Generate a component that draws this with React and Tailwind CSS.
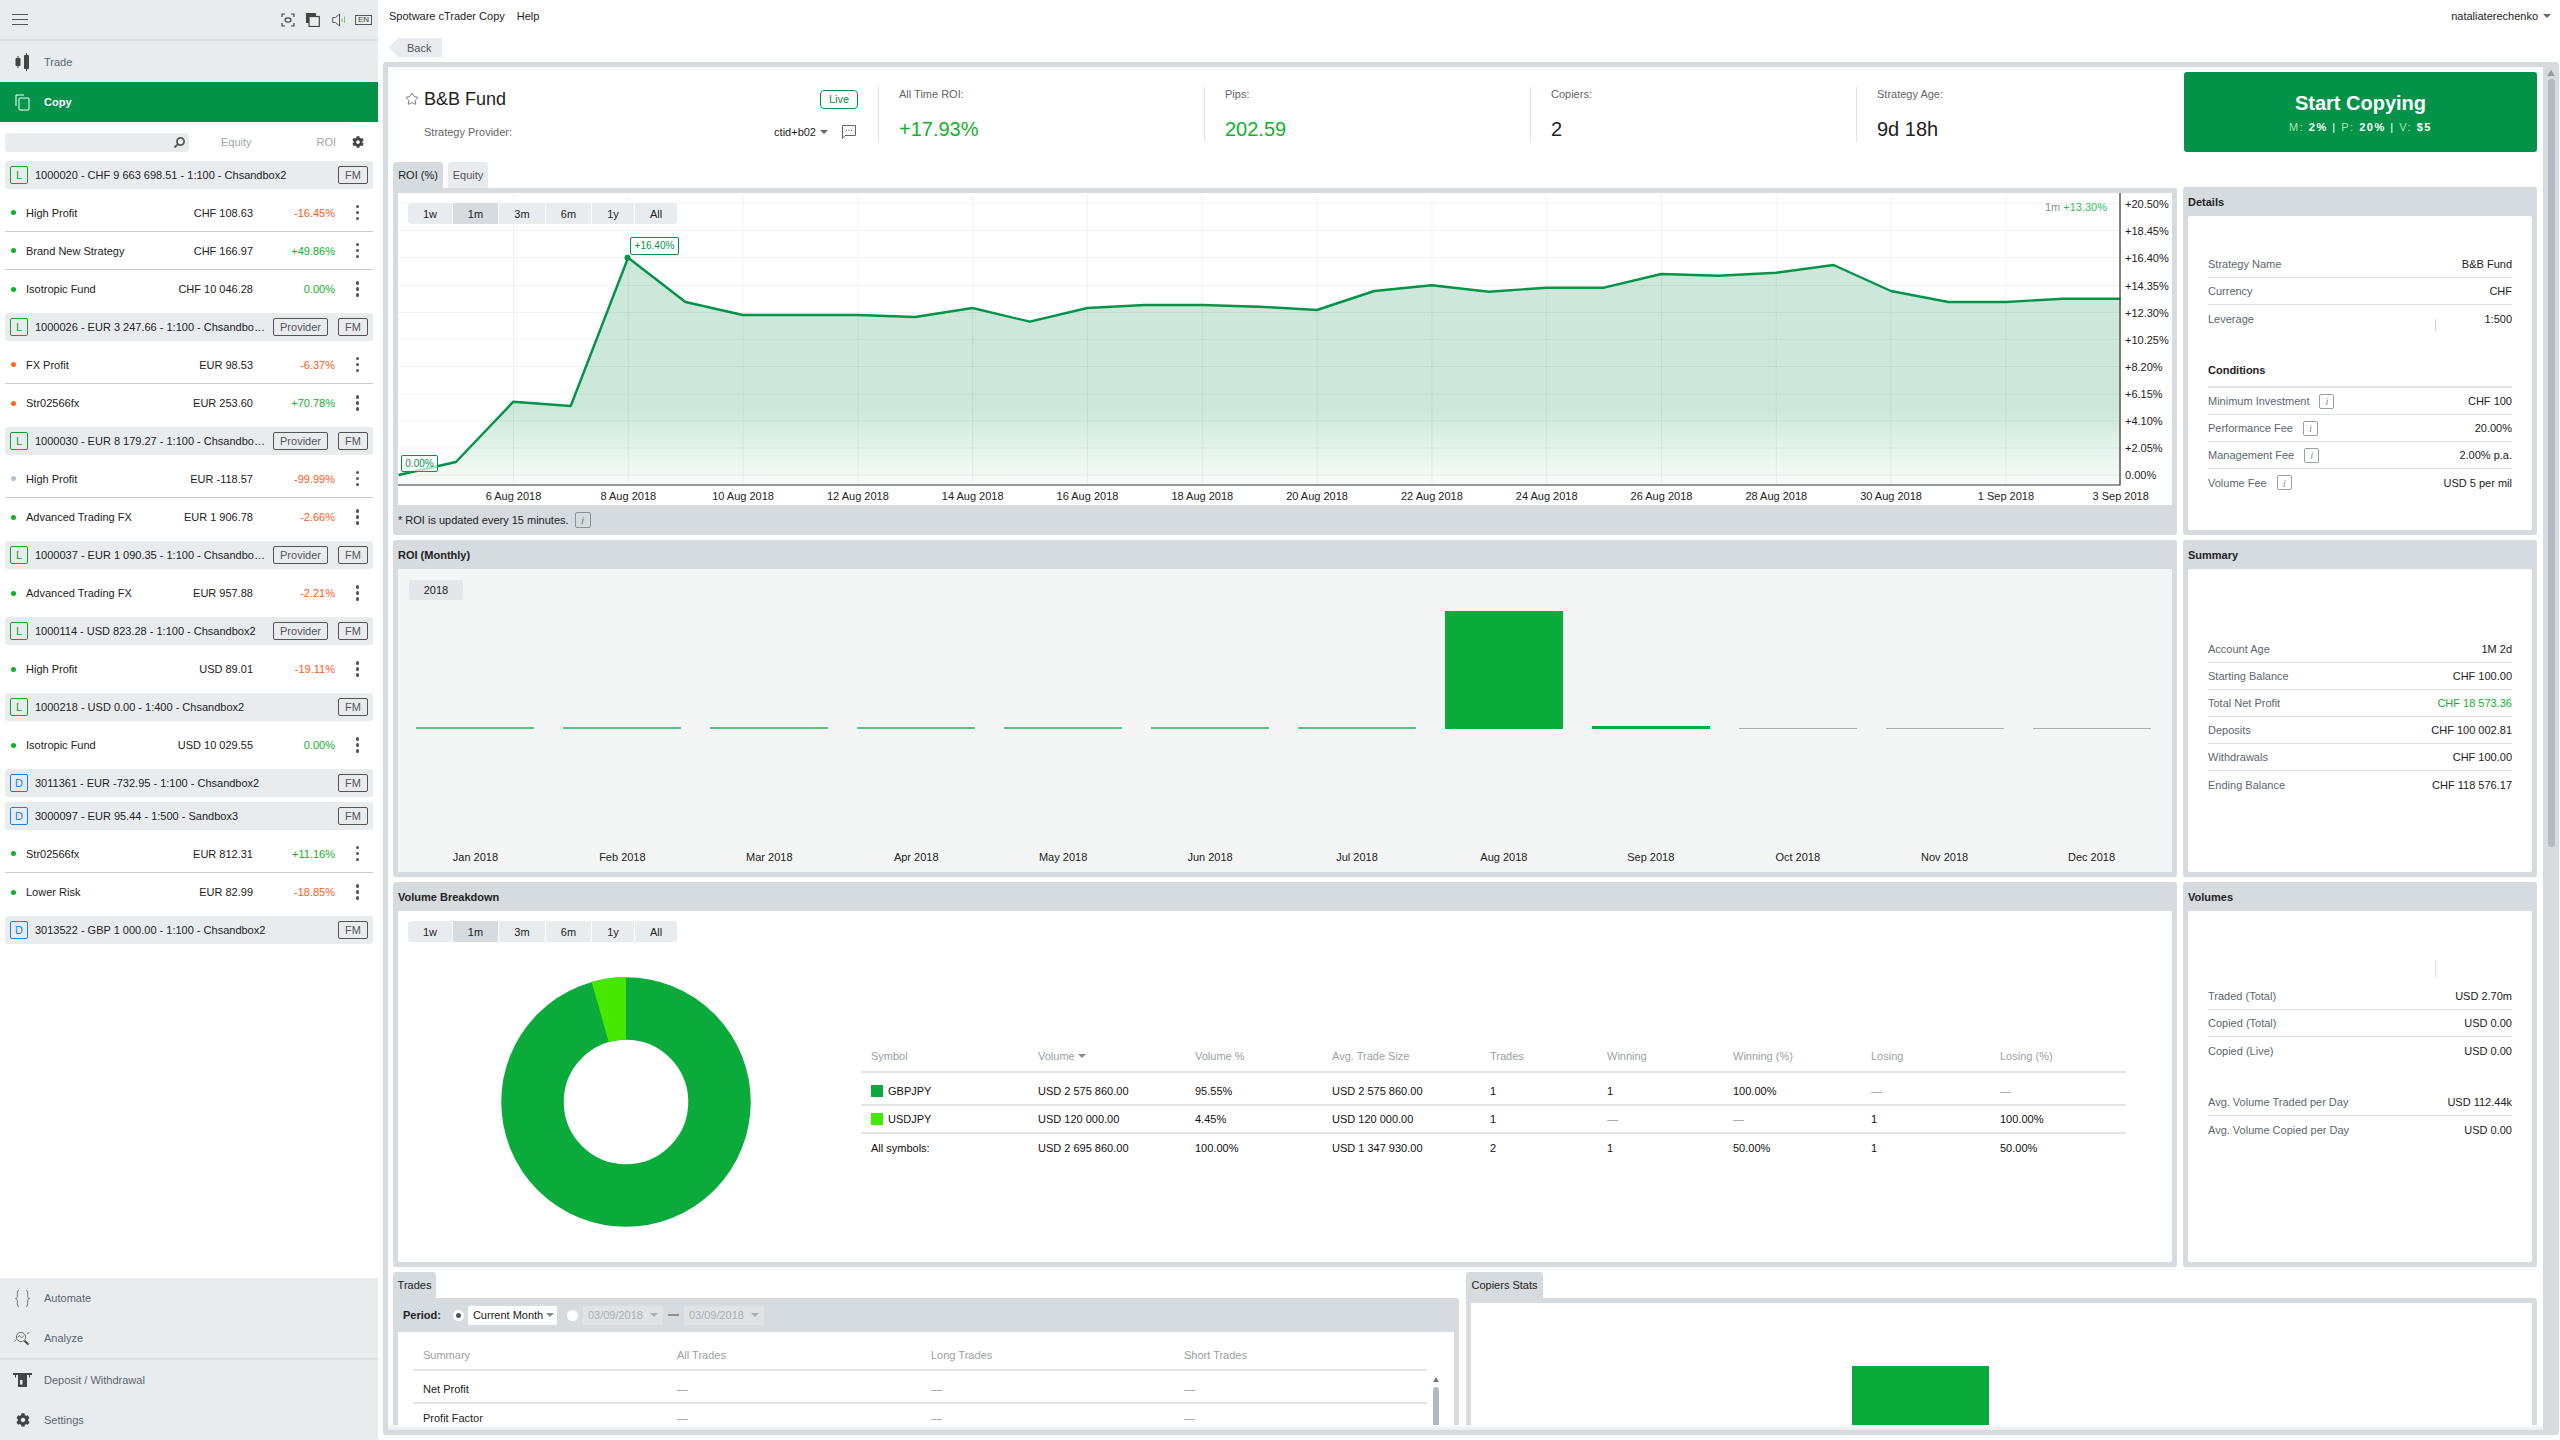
import React from 'react';
import { FaCog, FaSearch } from 'react-icons/fa';
import { Star } from 'lucide-react';

const accounts = [
    {
        kind: 'L', text: '1000020 - CHF 9 663 698.51 - 1:100 - Chsandbox2', rows: [
            { dot: 'bg-[#12b02c]', name: 'High Profit', eq: 'CHF 108.63', roi: '-16.45%' },
            { dot: 'bg-[#12b02c]', name: 'Brand New Strategy', eq: 'CHF 166.97', roi: '+49.86%' },
            { dot: 'bg-[#12b02c]', name: 'Isotropic Fund', eq: 'CHF 10 046.28', roi: '0.00%' },
        ]
    },
    {
        kind: 'L', provider: true, text: '1000026 - EUR 3 247.66 - 1:100 - Chsandbox2', rows: [
            { dot: 'bg-[#ff6a13]', name: 'FX Profit', eq: 'EUR 98.53', roi: '-6.37%' },
            { dot: 'bg-[#ff6a13]', name: 'Str02566fx', eq: 'EUR 253.60', roi: '+70.78%' },
        ]
    },
    {
        kind: 'L', provider: true, text: '1000030 - EUR 8 179.27 - 1:100 - Chsandbox2', rows: [
            { dot: 'bg-[#b5c0c5]', name: 'High Profit', eq: 'EUR -118.57', roi: '-99.99%' },
            { dot: 'bg-[#12b02c]', name: 'Advanced Trading FX', eq: 'EUR 1 906.78', roi: '-2.66%' },
        ]
    },
    {
        kind: 'L', provider: true, text: '1000037 - EUR 1 090.35 - 1:100 - Chsandbox2', rows: [
            { dot: 'bg-[#12b02c]', name: 'Advanced Trading FX', eq: 'EUR 957.88', roi: '-2.21%' },
        ]
    },
    {
        kind: 'L', provider: true, text: '1000114 - USD 823.28 - 1:100 - Chsandbox2', rows: [
            { dot: 'bg-[#12b02c]', name: 'High Profit', eq: 'USD 89.01', roi: '-19.11%' },
        ]
    },
    {
        kind: 'L', text: '1000218 - USD 0.00 - 1:400 - Chsandbox2', rows: [
            { dot: 'bg-[#12b02c]', name: 'Isotropic Fund', eq: 'USD 10 029.55', roi: '0.00%' },
        ]
    },
    { kind: 'D', text: '3011361 - EUR -732.95 - 1:100 - Chsandbox2', rows: [] },
    {
        kind: 'D', text: '3000097 - EUR 95.44 - 1:500 - Sandbox3', rows: [
            { dot: 'bg-[#12b02c]', name: 'Str02566fx', eq: 'EUR 812.31', roi: '+11.16%' },
            { dot: 'bg-[#12b02c]', name: 'Lower Risk', eq: 'EUR 82.99', roi: '-18.85%' },
        ]
    },
    { kind: 'D', text: '3013522 - GBP 1 000.00 - 1:100 - Chsandbox2', rows: [] },
];

const ranges = [
    { label: '1w', cls: 'w-[44px] bg-[#e9ecef]' },
    { label: '1m', cls: 'w-[45px] bg-[#d5dbdf]' },
    { label: '3m', cls: 'w-[46px] bg-[#e9ecef]' },
    { label: '6m', cls: 'w-[45px] bg-[#e9ecef]' },
    { label: '1y', cls: 'w-[42px] bg-[#e9ecef]' },
    { label: 'All', cls: 'w-[42px] bg-[#e9ecef]' },
];

// y values read off the reference, one per day from 4 Aug to 3 Sep
const roiLine = [475, 462, 401.7, 406, 257.7, 302, 315, 315, 315, 317, 308, 321.7, 308, 305, 305, 306.7, 310, 291, 285.3, 291.7, 287.7, 287.7, 274, 275.7, 272.7, 265, 291, 302, 302, 298.7, 298.7];
const dayX = (i) => 0.5 + i * 57.4;
const linePoints = roiLine.map((y, i) => `${dayX(i)},${y - 193}`).join(' ');
const yGrid = [
    [203.5, '+20.50%'], [230.5, '+18.45%'], [257.5, '+16.40%'], [285.5, '+14.35%'], [312.5, '+12.30%'], [339.5, '+10.25%'],
    [366.5, '+8.20%'], [394, '+6.15%'], [421, '+4.10%'], [448, '+2.05%'], [475, '0.00%'],
];
const xDates = ['6 Aug 2018', '8 Aug 2018', '10 Aug 2018', '12 Aug 2018', '14 Aug 2018', '16 Aug 2018', '18 Aug 2018', '20 Aug 2018', '22 Aug 2018', '24 Aug 2018', '26 Aug 2018', '28 Aug 2018', '30 Aug 2018', '1 Sep 2018', '3 Sep 2018'];

const months = [
    { m: 'Jan 2018', bar: 'h-[2px] bg-[#5fbf83]' },
    { m: 'Feb 2018', bar: 'h-[2px] bg-[#5fbf83]' },
    { m: 'Mar 2018', bar: 'h-[2px] bg-[#5fbf83]' },
    { m: 'Apr 2018', bar: 'h-[2px] bg-[#5fbf83]' },
    { m: 'May 2018', bar: 'h-[2px] bg-[#5fbf83]' },
    { m: 'Jun 2018', bar: 'h-[2px] bg-[#5fbf83]' },
    { m: 'Jul 2018', bar: 'h-[2px] bg-[#5fbf83]' },
    { m: 'Aug 2018', bar: 'h-[118px] bg-[#0aab3b]' },
    { m: 'Sep 2018', bar: 'h-[3px] bg-[#0aab3b]' },
    { m: 'Oct 2018', bar: 'h-[1px] bg-[#a9b0b3]' },
    { m: 'Nov 2018', bar: 'h-[1px] bg-[#a9b0b3]' },
    { m: 'Dec 2018', bar: 'h-[1px] bg-[#a9b0b3]' },
];

const breakdownCols = 'grid grid-cols-[167px_157px_137px_158px_117px_126px_138px_129px_1fr] pl-[10px] items-center';
const breakdown = [
    { swatch: 'bg-[#0aab3b]', sym: 'GBPJPY', cells: ['USD 2 575 860.00', '95.55%', 'USD 2 575 860.00', '1', '1', '100.00%', '—', '—'] },
    { swatch: 'bg-[#46e800]', sym: 'USDJPY', cells: ['USD 120 000.00', '4.45%', 'USD 120 000.00', '1', '—', '—', '1', '100.00%'] },
    { sym: 'All symbols:', cells: ['USD 2 695 860.00', '100.00%', 'USD 1 347 930.00', '2', '1', '50.00%', '1', '50.00%'] },
];

const Caret = ({ color = 'border-t-[#666]' }) => (
    <span className={`inline-block w-0 h-0 border-x-[4px] border-x-transparent border-t-[4px] ${color}`} />
);

const InfoBox = () => (
    <span className="inline-flex items-center justify-center w-[15px] h-[15px] border border-[#9aa0a3] rounded-[2px] font-['Liberation_Serif',serif] italic text-[11px] text-[#8a9094]">i</span>
);

const Kebab = () => (
    <div className="flex flex-col items-center gap-[2.5px]">
        <span className="w-[3.5px] h-[3.5px] rounded-full bg-[#555]" />
        <span className="w-[3.5px] h-[3.5px] rounded-full bg-[#555]" />
        <span className="w-[3.5px] h-[3.5px] rounded-full bg-[#555]" />
    </div>
);

const Tag = ({ children, cls }) => (
    <span className={`shrink-0 h-[18px] flex items-center justify-center border border-[#555] rounded-[2px] text-[#555] ${cls}`}>{children}</span>
);

const AccountGroup = ({ account }) => (
    <>
        <div className="h-[28px] flex items-center bg-[#e9ecef] rounded-[3px] pl-[5px] pr-[5px]">
            <span className={`shrink-0 w-[18px] h-[18px] flex items-center justify-center border rounded-[2px] ${account.kind === 'L' ? 'border-[#12a02c] text-[#12a02c]' : 'border-[#1a7fe0] text-[#1a7fe0]'}`}>{account.kind}</span>
            <span className="flex-1 min-w-0 truncate ml-[7px] mr-[8px] text-[#222]">{account.text}</span>
            {account.provider && <Tag cls="w-[55px] mr-[10px]">Provider</Tag>}
            <Tag cls="w-[30px]">FM</Tag>
        </div>
        {account.rows.length > 0 && (
            <div>
                {account.rows.map((r, i) => (
                    <div key={r.name + i} className={`h-[38px] flex items-center pl-[6px] ${i < account.rows.length - 1 ? 'border-b border-[#c8cdd0]' : ''}`}>
                        <span className={`shrink-0 w-[5px] h-[5px] rounded-full ${r.dot}`} />
                        <span className="flex-1 ml-[10px] text-[#222]">{r.name}</span>
                        <span className="text-[#222]">{r.eq}</span>
                        <span className={`w-[82px] text-right ${r.roi.startsWith('-') ? 'text-[#ff5a22]' : 'text-[#12b02c]'}`}>{r.roi}</span>
                        <span className="w-[38px] flex justify-center pl-[7px]"><Kebab /></span>
                    </div>
                ))}
            </div>
        )}
    </>
);

const NavRow = ({ icon, label, cls = '' }) => (
    <div className={`h-[40px] flex items-center text-[#5a6670] ${cls}`}>
        <span className="w-[44px] flex justify-center pl-[1px] shrink-0">{icon}</span>
        <span>{label}</span>
    </div>
);

const Sidebar = () => (
    <aside className="w-[378px] shrink-0 flex flex-col h-full">
        <div className="h-[41px] bg-[#e9ecef] border-b-2 border-[#dde1e4] flex items-center pl-[12px]">
            <div className="w-[16px] flex flex-col gap-[3.5px]">
                <span className="h-[1.5px] bg-[#555]" />
                <span className="h-[1.5px] bg-[#555]" />
                <span className="h-[1.5px] bg-[#555]" />
            </div>
            <svg className="ml-[253px]" width="14" height="14" viewBox="0 0 14 14" fill="none" stroke="#444" strokeWidth="1.2">
                <path d="M1 4V1H4M10 1H13V4M13 10V13H10M4 13H1V10" />
                <ellipse cx="7" cy="7" rx="3" ry="2.2" />
            </svg>
            <svg className="ml-[11px]" width="14" height="14" viewBox="0 0 14 14">
                <rect x="0" y="0" width="10" height="10" fill="#444" />
                <rect x="3" y="3.5" width="10.3" height="10" fill="#e9ecef" stroke="#444" strokeWidth="1.2" />
            </svg>
            <svg className="ml-[12px]" width="15" height="14" viewBox="0 0 15 14" fill="none">
                <path d="M0.7 4.5H3.5L7.5 1V13L3.5 9.5H0.7Z" stroke="#555" />
                <path d="M10 5.5V9M12.5 3.5V10" stroke="#7bc47f" />
            </svg>
            <span className="ml-[8px] w-[17px] h-[10px] border border-[#555] flex items-center justify-center text-[8px] leading-none text-[#444]">EN</span>
        </div>
        <div className="h-[41px] bg-[#e9ecef]">
            <NavRow
                cls="h-[41px]"
                icon={(
                    <svg width="15" height="18" viewBox="0 0 15 18" fill="#444">
                        <rect x="0.5" y="5" width="5" height="8" rx="1" />
                        <rect x="2.5" y="3" width="1" height="12" />
                        <rect x="9" y="2" width="5" height="14" rx="1" />
                        <rect x="11" y="0" width="1" height="18" />
                    </svg>
                )}
                label="Trade"
            />
        </div>
        <div className="h-[40px] bg-[#029348] flex items-center font-bold text-white">
            <span className="w-[44px] flex justify-center pl-[1px]">
                <svg width="15" height="17" viewBox="0 0 15 17" fill="none" stroke="#fff" strokeWidth="1">
                    <path d="M1 12V1H9" />
                    <rect x="4" y="4" width="10" height="12" rx="1" />
                </svg>
            </span>
            <span>Copy</span>
        </div>
        <div className="flex-1 px-[5px] min-h-0 overflow-hidden">
            <div className="h-[39px] flex items-center text-[#a0a7ab] pt-[1px]">
                <div className="w-[184px] h-[19px] bg-[#e9ecef] rounded-[3px] flex items-center justify-end pr-[4px]">
                    <FaSearch className="w-[11px] h-[11px] text-[#555] -scale-x-100" />
                </div>
                <span className="ml-[32px]">Equity</span>
                <span className="ml-[65px]">ROI</span>
                <FaCog className="ml-[16px] w-[12px] h-[12px] text-[#444]" />
            </div>
            <div className="flex flex-col gap-[5px]">
                {accounts.map((a) => <AccountGroup key={a.text} account={a} />)}
            </div>
        </div>
        <div className="bg-[#e9ecef]">
            <NavRow
                icon={(
                    <svg width="15" height="17" viewBox="0 0 15 17" fill="none" stroke="#666" strokeWidth="0.9">
                        <path d="M4 0.5C2 0.5 2.3 2.5 2.3 4.5V6.5C2.3 7.5 1.5 8.5 0.5 8.5C1.5 8.5 2.3 9.5 2.3 10.5V12.5C2.3 14.5 2 16.5 4 16.5" />
                        <path d="M11 0.5C13 0.5 12.7 2.5 12.7 4.5V6.5C12.7 7.5 13.5 8.5 14.5 8.5C13.5 8.5 12.7 9.5 12.7 10.5V12.5C12.7 14.5 13 16.5 11 16.5" />
                    </svg>
                )}
                label="Automate"
            />
            <NavRow
                icon={(
                    <svg width="17" height="15" viewBox="0 0 17 15" fill="none" stroke="#666" strokeWidth="0.9">
                        <circle cx="7" cy="6" r="4.6" />
                        <path d="M3.5 6.5L5.5 4.5L7.5 7L10 4.5" />
                        <path d="M10.5 9.8L14.5 13.6" stroke="#444" strokeWidth="2" />
                        <path d="M0.5 10.5L2.5 8.5M13 2.5L15.5 1.5" />
                    </svg>
                )}
                label="Analyze"
            />
            <div className="border-t-2 border-[#dde1e4]" />
            <NavRow
                icon={(
                    <svg width="19" height="14" viewBox="0 0 19 14" fill="#444">
                        <path d="M0 0H19V2H17V4.5H16V2H3V4.5H2V2H0Z" />
                        <rect x="5" y="2" width="9" height="12" />
                        <rect x="7" y="7" width="2.5" height="4.5" fill="#e9ecef" />
                    </svg>
                )}
                label="Deposit / Withdrawal"
            />
            <NavRow icon={<FaCog className="w-[14px] h-[14px] text-[#444]" />} label="Settings" />
        </div>
    </aside>
);

const Stat = ({ label, value, green, cls = 'w-[326px]' }) => (
    <div className={`h-[55px] border-l border-[#dfe2e4] pl-[20px] ${cls}`}>
        <div className="h-[14px] leading-[14px] text-[#666]">{label}</div>
        <div className={`mt-[16px] text-[20px] leading-[24px] ${green ? 'text-[#12b02c]' : 'text-[#222]'}`}>{value}</div>
    </div>
);

const RangeButtons = () => (
    <div className="flex gap-[1px] rounded-[3px] overflow-hidden w-fit h-[21px]">
        {ranges.map((r) => (
            <span key={r.label} className={`flex items-center justify-center text-[#222] ${r.cls}`}>{r.label}</span>
        ))}
    </div>
);

const RoiChart = () => (
    <div className="relative h-[312px] bg-white">
        <svg className="block" width="1774" height="312" viewBox="0 0 1774 312">
            <defs>
                <linearGradient id="roiFill" x1="0" y1="0" x2="0" y2="312" gradientUnits="userSpaceOnUse">
                    <stop offset="0.7" stopColor="#cde8da" />
                    <stop offset="0.94" stopColor="#cde8da" stopOpacity="0.08" />
                </linearGradient>
            </defs>
            <polygon points={`${linePoints} 1722,292 0.5,292`} fill="url(#roiFill)" />
            {yGrid.map(([y]) => <line key={y} x1="0" x2="1722" y1={y - 193} y2={y - 193} stroke="#000" strokeOpacity="0.05" />)}
            {xDates.map((d, i) => (
                <line key={d} x1={115.5 + i * 114.8} x2={115.5 + i * 114.8} y1="1" y2="292" stroke="#000" strokeOpacity="0.05" />
            ))}
            <polyline points={linePoints} fill="none" stroke="#029348" strokeWidth="2.4" strokeLinejoin="round" />
            <circle cx="229.5" cy="64.7" r="3" fill="#029348" />
            <path d="M0 292H1722V0" fill="none" stroke="#333" strokeWidth="1.2" />
            <g fontSize="11" fill="#222">
                {yGrid.map(([y, t]) => <text key={t} x="1727" y={y - 193 + 4}>{t}</text>)}
                {xDates.map((d, i) => <text key={d} x={115.5 + i * 114.8} y="306.5" textAnchor="middle">{d}</text>)}
            </g>
        </svg>
        <div className="absolute left-[10px] top-[10px]"><RangeButtons /></div>
        <span className="absolute left-[232px] top-[44px] w-[49px] h-[18px] flex items-center justify-center bg-white border border-[#029348] rounded-[2px] text-[10px] text-[#029348]">+16.40%</span>
        <span className="absolute left-[3px] top-[262px] w-[37px] h-[17px] flex items-center justify-center bg-white/70 border border-[#029348] rounded-[2px] text-[10px] text-[#029348]">0.00%</span>
        <span className="absolute right-[65px] top-[7px] text-[#8a9094]">1m <span className="text-[#2fbf5a]">+13.30%</span></span>
    </div>
);

const SidePanel = ({ title, cls, children }) => (
    <section className={`w-[354px] bg-[#d5dbdf] rounded-[3px] flex flex-col ${cls}`}>
        <h3 className="h-[29px] flex items-center px-[5px] font-bold text-[#222]">{title}</h3>
        <div className="relative flex-1 mx-[5px] mb-[5px] bg-white rounded-[2px] px-[20px]">{children}</div>
    </section>
);

const InfoRow = ({ label, value, info, last, green }) => (
    <div className={`h-[27px] flex items-center justify-between ${last ? '' : 'border-b border-[#dfe2e4]'}`}>
        <span className="flex items-center gap-[10px] text-[#5b6770]">{label}{info && <InfoBox />}</span>
        <span className={green ? 'text-[#12b02c]' : 'text-[#222]'}>{value}</span>
    </div>
);

const Dash = ({ value }) => (
    <span className={value === '—' ? 'text-[#999]' : 'text-[#111]'}>{value}</span>
);

const App = () => (
    <div className="w-[2560px] h-[1440px] flex overflow-hidden bg-white font-['Liberation_Sans',Arial,sans-serif] text-[11px] leading-[14px]">
        <Sidebar />
        <main className="flex-1 min-w-0 flex flex-col">
            <div className="h-[38px] shrink-0 flex items-start pt-[9px] pl-[11px] pr-[9px] text-[#222]">
                <span>Spotware cTrader Copy</span>
                <span className="ml-[12px]">Help</span>
                <span className="ml-auto">nataliaterechenko</span>
                <span className="ml-[5px] mt-[5px] flex"><Caret /></span>
            </div>
            <div className="h-[24px] shrink-0 pl-[5px]">
                <div className="ml-[6px] w-[53px] h-[19px] flex items-center pl-[18px] bg-[#e9ecef] text-[#555] [clip-path:polygon(9px_0,100%_0,100%_100%,9px_100%,0_50%)]">Back</div>
            </div>
            <div className="flex-1 min-h-0 ml-[5px] mr-[1px] mb-[5px] bg-[#d5dbdf] rounded-[3px] pt-[5px] pl-[5px] flex">
                <div className="w-[2155px] shrink-0 flex flex-col">
                    <div className="h-[1358px] bg-white overflow-hidden">
                        {/* strategy header */}
                        <div className="h-[95px] flex items-start">
                            <div className="w-[490px] shrink-0 pl-[17px] pt-[20px] pr-[20px]">
                                <div className="h-[24px] flex items-center">
                                    <Star className="w-[14px] h-[14px] text-[#444]" strokeWidth={1.2} />
                                    <span className="ml-[5px] text-[18px] leading-[22px] text-[#222]">B&amp;B Fund</span>
                                    <span className="ml-auto w-[38px] h-[19px] flex items-center justify-center border border-[#029348] rounded-[4px] text-[#029348]">Live</span>
                                </div>
                                <div className="h-[14px] mt-[14px] flex items-center pl-[19px]">
                                    <span className="text-[#666]">Strategy Provider:</span>
                                    <span className="ml-auto text-[#222]">ctid+b02</span>
                                    <span className="ml-[4px] flex"><Caret /></span>
                                    <svg className="ml-[14px] mr-[2px]" width="14" height="14" viewBox="0 0 14 14" fill="none" stroke="#555" strokeWidth="0.9">
                                        <path d="M0.5 0.5H13.5V10.5H3L0.5 13.5Z" />
                                        <path d="M4 5.5H5M6.5 5.5H7.5M9 5.5H10" />
                                    </svg>
                                </div>
                            </div>
                            <div className="flex mt-[20px]">
                                <Stat label="All Time ROI:" value="+17.93%" green />
                                <Stat label="Pips:" value="202.59" green />
                                <Stat label="Copiers:" value="2" />
                                <Stat label="Strategy Age:" value="9d 18h" cls="w-[328px]" />
                            </div>
                            <button className="mt-[5px] w-[353px] h-[80px] bg-[#029348] rounded-[3px] text-white flex flex-col items-center justify-center">
                                <span className="text-[20px] leading-[24px] font-bold">Start Copying</span>
                                <span className="mt-[5px] tracking-[1.5px]"><span className="text-[#a5e6a5]">M: </span><b>2%</b> | <span className="text-[#a5e6a5]">P: </span><b>20%</b> | <span className="text-[#a5e6a5]">V: </span><b>$5</b></span>
                            </button>
                        </div>

                        {/* ROI chart + details */}
                        <div className="flex gap-[6px] pl-[5px] h-[373px]">
                            <div className="w-[1784px] flex flex-col">
                                <div className="flex h-[26px] gap-[5px]">
                                    <span className="w-[50px] flex items-center justify-center bg-[#d5dbdf] rounded-t-[3px] text-[#222]">ROI (%)</span>
                                    <span className="w-[40px] flex items-center justify-center bg-[#e9ecef] rounded-t-[3px] text-[#555]">Equity</span>
                                </div>
                                <div className="flex-1 bg-[#d5dbdf] rounded-b-[3px] rounded-tr-[3px] p-[5px] pb-0">
                                    <RoiChart />
                                    <div className="h-[30px] flex items-center gap-[6px] text-[#222]">
                                        * ROI is updated every 15 minutes.
                                        <span className="inline-flex items-center justify-center w-[16px] h-[16px] border border-[#8a9094] rounded-[2px] font-['Liberation_Serif',serif] italic text-[#777]">i</span>
                                    </div>
                                </div>
                            </div>
                            <SidePanel title="Details" cls="mt-[25px]">
                                <div className="pt-[35px]">
                                    <InfoRow label="Strategy Name" value="B&B Fund" />
                                    <InfoRow label="Currency" value="CHF" />
                                    <InfoRow label="Leverage" value="1:500" last />
                                    <span className="absolute left-[247px] top-[103px] w-px h-[12px] bg-[#cfd3d6]" />
                                    <div className="mt-[27px] h-[29px] pb-[5px] flex items-center font-bold text-[#222] border-b-2 border-[#dfe2e4]">Conditions</div>
                                    <InfoRow label="Minimum Investment" value="CHF 100" info />
                                    <InfoRow label="Performance Fee" value="20.00%" info />
                                    <InfoRow label="Management Fee" value="2.00% p.a." info />
                                    <InfoRow label="Volume Fee" value="USD 5 per mil" info last />
                                </div>
                            </SidePanel>
                        </div>

                        {/* monthly ROI + summary */}
                        <div className="flex gap-[6px] pl-[5px] h-[337px] mt-[5px]">
                            <section className="w-[1784px] bg-[#d5dbdf] rounded-[3px] flex flex-col">
                                <h3 className="h-[29px] flex items-center px-[5px] font-bold text-[#222]">ROI (Monthly)</h3>
                                <div className="flex-1 mx-[5px] mb-[5px] bg-[#f4f6f5] pt-[11px]">
                                    <span className="ml-[11px] w-[54px] h-[20px] flex items-center justify-center bg-[#e3e7e9] rounded-[2px] text-[#222]">2018</span>
                                    <div className="grid grid-cols-12 h-[129px] items-end ml-[4px] mr-[7px]">
                                        {months.map((b) => <div key={b.m} className={`w-[118px] mx-auto ${b.bar}`} />)}
                                    </div>
                                    <div className="grid grid-cols-12 mt-[121px] ml-[4px] mr-[7px] text-center text-[#222]">
                                        {months.map((b) => <span key={b.m}>{b.m}</span>)}
                                    </div>
                                </div>
                            </section>
                            <SidePanel title="Summary">
                                <div className="pt-[67px]">
                                    <InfoRow label="Account Age" value="1M 2d" />
                                    <InfoRow label="Starting Balance" value="CHF 100.00" />
                                    <InfoRow label="Total Net Profit" value="CHF 18 573.36" green />
                                    <InfoRow label="Deposits" value="CHF 100 002.81" />
                                    <InfoRow label="Withdrawals" value="CHF 100.00" />
                                    <InfoRow label="Ending Balance" value="CHF 118 576.17" last />
                                </div>
                            </SidePanel>
                        </div>

                        {/* volume breakdown + volumes */}
                        <div className="flex gap-[6px] pl-[5px] h-[385px] mt-[5px]">
                            <section className="w-[1784px] bg-[#d5dbdf] rounded-[3px] flex flex-col">
                                <h3 className="h-[29px] flex items-center px-[5px] font-bold text-[#222]">Volume Breakdown</h3>
                                <div className="flex-1 mx-[5px] mb-[5px] bg-white rounded-[2px] pt-[10px] pl-[10px] relative">
                                    <RangeButtons />
                                    <div className="flex mt-[35px]">
                                        <svg className="ml-[93px] shrink-0" width="250" height="250" viewBox="-125 -125 250 250">
                                            <circle r="93.5" fill="none" stroke="#0aab3b" strokeWidth="62.5" />
                                            <path d="M0 -125A125 125 0 0 0 -34.4 -120.2L-17.2 -60A62.5 62.5 0 0 1 0 -62.5Z" fill="#46e800" />
                                        </svg>
                                        <div className="ml-[110px] flex-1 pr-[46px] text-[#111]">
                                            <div className="mt-[65px] h-[31px] pb-[2px] border-b-2 border-[#e2e4e6] text-[#9aa0a3]">
                                                <div className={`${breakdownCols} h-full`}>
                                                    <span>Symbol</span>
                                                    <span className="flex items-center gap-[3px]">Volume <Caret color="border-t-[#888]" /></span>
                                                    <span>Volume %</span>
                                                    <span>Avg. Trade Size</span>
                                                    <span>Trades</span>
                                                    <span>Winning</span>
                                                    <span>Winning (%)</span>
                                                    <span>Losing</span>
                                                    <span>Losing (%)</span>
                                                </div>
                                            </div>
                                            {breakdown.map((row, i) => (
                                                <div key={row.sym} className={`${breakdownCols} ${i === 0 ? 'h-[33px] pt-[4px]' : 'h-[28px]'} ${i < 2 ? 'border-b-2 border-[#e2e4e6]' : ''}`}>
                                                    <span className="flex items-center gap-[5px]">
                                                        {row.swatch && <span className={`w-[12px] h-[12px] ${row.swatch}`} />}
                                                        {row.sym}
                                                    </span>
                                                    {row.cells.map((c, j) => <Dash key={j} value={c} />)}
                                                </div>
                                            ))}
                                        </div>
                                    </div>
                                </div>
                            </section>
                            <SidePanel title="Volumes">
                                <span className="absolute left-[247px] top-[49px] w-px h-[18px] bg-[#e8dfdc]" />
                                <div className="pt-[72px]">
                                    <InfoRow label="Traded (Total)" value="USD 2.70m" />
                                    <InfoRow label="Copied (Total)" value="USD 0.00" />
                                    <InfoRow label="Copied (Live)" value="USD 0.00" last />
                                    <div className="h-[25px]" />
                                    <InfoRow label="Avg. Volume Traded per Day" value="USD 112.44k" />
                                    <InfoRow label="Avg. Volume Copied per Day" value="USD 0.00" last />
                                </div>
                            </SidePanel>
                        </div>

                        {/* trades + copiers */}
                        <div className="flex gap-[7px] pl-[5px] mt-[5px]">
                            <div className="w-[1066px] shrink-0">
                                <span className="w-[43px] h-[26px] flex items-center justify-center bg-[#d5dbdf] rounded-t-[3px] text-[#222]">Trades</span>
                                <div className="bg-[#d5dbdf] px-[5px] rounded-tr-[3px]">
                                    <div className="h-[34px] flex items-center pl-[5px] text-[#222]">
                                        <b>Period:</b>
                                        <span className="ml-[12px] w-[11px] h-[11px] rounded-full bg-white flex items-center justify-center"><span className="w-[5px] h-[5px] rounded-full bg-[#555]" /></span>
                                        <span className="ml-[4px] w-[89px] h-[19px] rounded-[2px] bg-white flex items-center pl-[5px] gap-[3px]">Current Month <Caret color="border-t-[#888]" /></span>
                                        <span className="ml-[10px] w-[11px] h-[11px] rounded-full bg-white" />
                                        <span className="ml-[5px] w-[80px] h-[19px] rounded-[2px] bg-[#dfe3e6] text-[#a9b0b3] flex items-center justify-between px-[5px]">03/09/2018 <Caret color="border-t-[#a9b0b3]" /></span>
                                        <span className="mx-[5px] w-[11px] h-[2px] bg-[#8a9094]" />
                                        <span className="w-[80px] h-[19px] rounded-[2px] bg-[#dfe3e6] text-[#a9b0b3] flex items-center justify-between px-[5px]">03/09/2018 <Caret color="border-t-[#a9b0b3]" /></span>
                                    </div>
                                    <div className="relative bg-white pl-[15px] pr-[27px] pt-[16px] h-[200px]">
                                        <div className="h-[23px] border-b-2 border-[#e2e4e6] pl-[10px] grid grid-cols-[254px_254px_253px_1fr] text-[#9aa0a3]">
                                            <span>Summary</span><span>All Trades</span><span>Long Trades</span><span>Short Trades</span>
                                        </div>
                                        <div className="h-[33px] border-b-2 border-[#e2e4e6] pl-[10px] pt-[5px] grid grid-cols-[254px_254px_253px_1fr] items-center text-[#222]">
                                            <span>Net Profit</span><Dash value="—" /><Dash value="—" /><Dash value="—" />
                                        </div>
                                        <div className="h-[28px] pl-[10px] grid grid-cols-[254px_254px_253px_1fr] items-center text-[#222]">
                                            <span>Profit Factor</span><Dash value="—" /><Dash value="—" /><Dash value="—" />
                                        </div>
                                        <span className="absolute left-[1035px] top-[45px] w-0 h-0 border-x-[3px] border-x-transparent border-b-[5px] border-b-[#777]" />
                                        <span className="absolute left-[1035px] top-[55px] w-[6px] h-[150px] rounded-[3px] bg-[#aebbc2]" />
                                    </div>
                                </div>
                            </div>
                            <div className="w-[1071px] shrink-0">
                                <span className="w-[77px] h-[26px] flex items-center justify-center bg-[#d5dbdf] rounded-t-[3px] text-[#222]">Copiers Stats</span>
                                <div className="bg-[#d5dbdf] px-[5px] pt-[5px] rounded-tr-[3px]">
                                    <div className="bg-white h-[200px] pt-[63px] pl-[381px]">
                                        <div className="w-[137px] h-[100px] bg-[#0aab3b]" />
                                    </div>
                                </div>
                            </div>
                        </div>
                    </div>
                    <div className="h-[5px] bg-gradient-to-b from-[#fafafa] to-[#e9ecef]" />
                </div>
                <div className="flex-1 flex flex-col items-center">
                    <span className="mt-[3px] w-0 h-0 border-x-[4px] border-x-transparent border-b-[6px] border-b-[#8f9ca3]" />
                    <span className="mt-[3px] w-[7px] h-[768px] rounded-[3px] bg-[#aebbc2]" />
                </div>
            </div>
        </main>
    </div>
);

export default App;
